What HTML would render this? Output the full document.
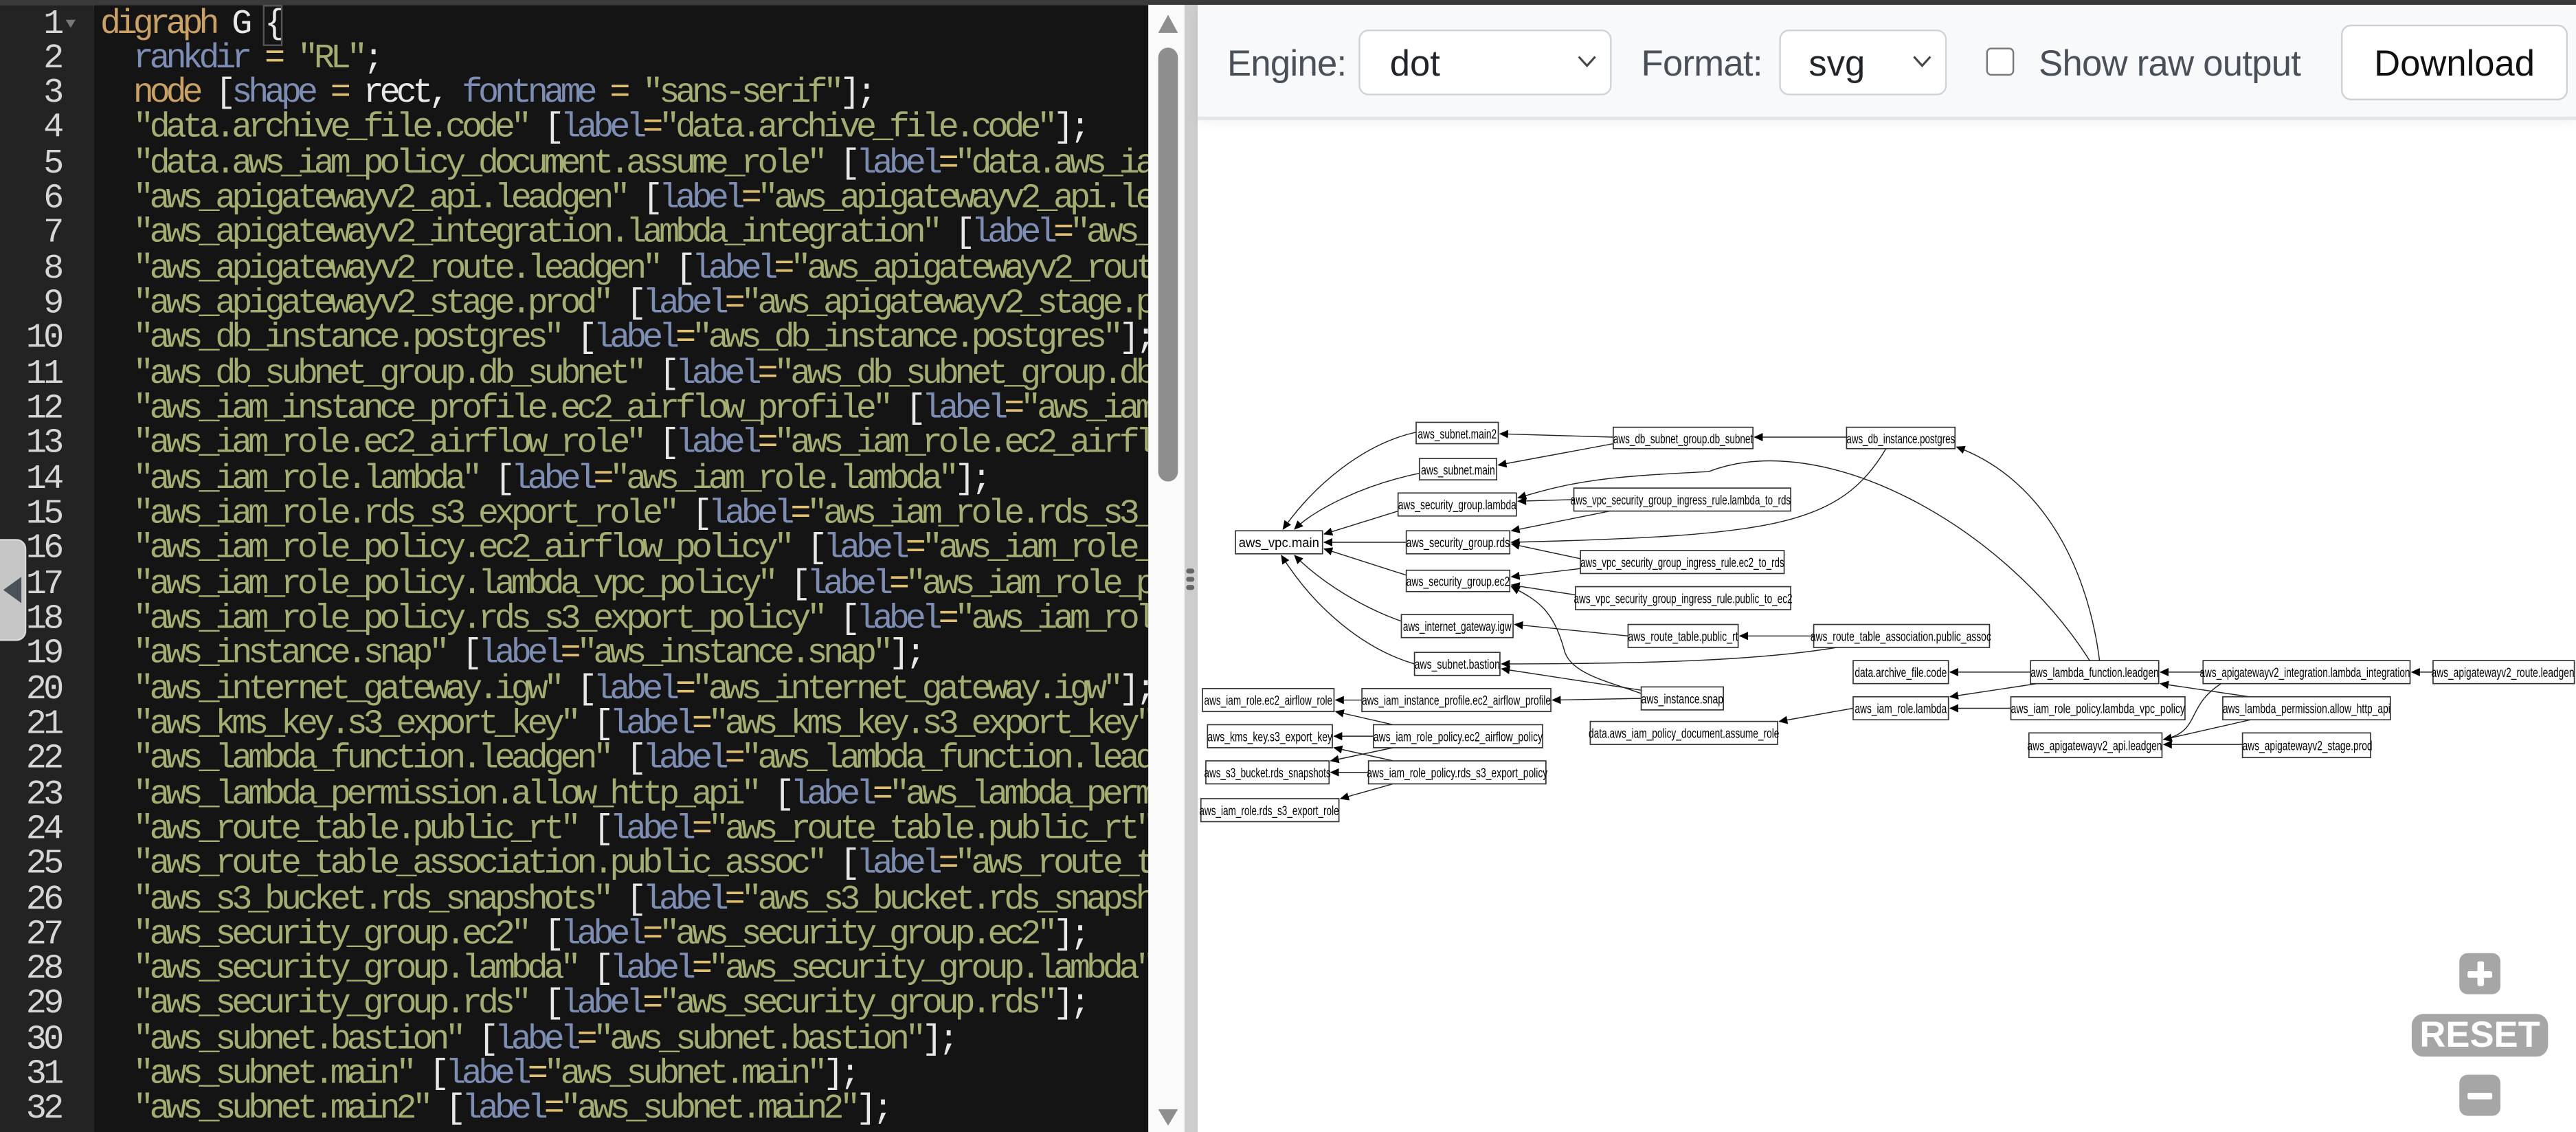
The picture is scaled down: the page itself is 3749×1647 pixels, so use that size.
<!DOCTYPE html>
<html><head><meta charset="utf-8">
<style>
html,body{margin:0;padding:0;width:3749px;height:1646px;overflow:hidden;background:#fff;}
#w{position:absolute;left:0;top:0;width:1568px;height:689px;transform:scale(2.39094);transform-origin:0 0;overflow:hidden;}
#topbar{position:absolute;left:0;top:0;width:1568px;height:3px;background:#3a3a3a;}
#gutter{position:absolute;left:0;top:4.5px;width:57px;height:686px;background:#232323;}
#gbg{position:absolute;left:0;top:3px;width:57px;height:686px;background:#232323;}
#code{position:absolute;left:57px;top:3px;width:642px;height:686px;background:#141414;overflow:hidden;}
#ci{position:absolute;left:0;top:1.5px;width:642px;height:686px;}
.ln{position:absolute;left:0;width:37px;text-align:right;color:#d6d6d6;font:21px/21.32px "Liberation Mono",monospace;letter-spacing:-2px;}
.cl{position:absolute;left:4px;white-space:pre;font:21px/21.32px "Liberation Mono",monospace;letter-spacing:-2.6px;color:#e8e8e8;}
.k{color:#c9a065}.s{color:#a3ae72}.a{color:#7e8db3}.e{color:#e0c070}
#sb{position:absolute;left:699px;top:3px;width:22px;height:686px;background:#fafafa;}
#thumb{position:absolute;left:705px;top:29px;width:12px;height:264px;background:#8e8e8e;border-radius:6px;}
#div{position:absolute;left:721px;top:3px;width:8px;height:686px;background:#cdcdcd;}
#right{position:absolute;left:729px;top:3px;width:839px;height:686px;background:#fff;}
#tb{position:absolute;left:729px;top:3px;width:839px;height:68px;background:#f8f9fa;border-bottom:2px solid #e3e5e8;box-shadow:0 2px 6px rgba(0,0,0,.05);}
.lbl{position:absolute;top:23px;font:22px "Liberation Sans",sans-serif;color:#495057;letter-spacing:-.3px}
.sel{position:absolute;top:15px;height:38px;border:1px solid #cfd4da;border-radius:6px;background:#fff;font:22px "Liberation Sans",sans-serif;color:#212529;}
#tab{position:absolute;left:-6px;top:328px;width:20px;height:60px;background:#c6c6c6;border:1px solid #d8d8d8;border-radius:6px;}
.zb{position:absolute;background:#a6a6a6;border-radius:5px;}
</style></head><body><div id="w">
<div id="topbar"></div>
<div id="gbg"></div>
<div id="gutter">
<div class="ln" style="top:0">1</div><div class="ln" style="top:21.32px">2</div><div class="ln" style="top:42.64px">3</div><div class="ln" style="top:63.96px">4</div><div class="ln" style="top:85.28px">5</div><div class="ln" style="top:106.6px">6</div><div class="ln" style="top:127.92px">7</div><div class="ln" style="top:149.24px">8</div><div class="ln" style="top:170.56px">9</div><div class="ln" style="top:191.88px">10</div><div class="ln" style="top:213.2px">11</div><div class="ln" style="top:234.52px">12</div><div class="ln" style="top:255.84px">13</div><div class="ln" style="top:277.16px">14</div><div class="ln" style="top:298.48px">15</div><div class="ln" style="top:319.8px">16</div><div class="ln" style="top:341.12px">17</div><div class="ln" style="top:362.44px">18</div><div class="ln" style="top:383.76px">19</div><div class="ln" style="top:405.08px">20</div><div class="ln" style="top:426.4px">21</div><div class="ln" style="top:447.72px">22</div><div class="ln" style="top:469.04px">23</div><div class="ln" style="top:490.36px">24</div><div class="ln" style="top:511.68px">25</div><div class="ln" style="top:533px">26</div><div class="ln" style="top:554.32px">27</div><div class="ln" style="top:575.64px">28</div><div class="ln" style="top:596.96px">29</div><div class="ln" style="top:618.28px">30</div><div class="ln" style="top:639.6px">31</div><div class="ln" style="top:660.92px">32</div>
<div style="position:absolute;left:40px;top:7px;width:0;height:0;border-left:3.5px solid transparent;border-right:3.5px solid transparent;border-top:5px solid #777"></div>
</div>
<div id="tab"><div style="position:absolute;left:7px;top:22px;width:0;height:0;border-top:8px solid transparent;border-bottom:8px solid transparent;border-right:11px solid #4b5159"></div></div>
<div id="code"><div id="ci">
<div class="cl" style="top:0"><span class="k">digraph</span> G <span style="outline:1px solid #555">{</span></div>
<div class="cl" style="top:21.32px">  <span class="a">rankdir</span> <span class="e">=</span> <span class="s">"RL"</span>;</div>
<div class="cl" style="top:42.64px">  <span class="k">node</span> [<span class="a">shape</span> <span class="e">=</span> rect, <span class="a">fontname</span> <span class="e">=</span> <span class="s">"sans-serif"</span>];</div>
<div class="cl" style="top:63.96px">  <span class="s">"data.archive_file.code"</span> [<span class="a">label</span><span class="e">=</span><span class="s">"data.archive_file.code"</span>];</div>
<div class="cl" style="top:85.28px">  <span class="s">"data.aws_iam_policy_document.assume_role"</span> [<span class="a">label</span><span class="e">=</span><span class="s">"data.aws_iam_policy_document.assume_role"</span>];</div>
<div class="cl" style="top:106.6px">  <span class="s">"aws_apigatewayv2_api.leadgen"</span> [<span class="a">label</span><span class="e">=</span><span class="s">"aws_apigatewayv2_api.leadgen"</span>];</div>
<div class="cl" style="top:127.92px">  <span class="s">"aws_apigatewayv2_integration.lambda_integration"</span> [<span class="a">label</span><span class="e">=</span><span class="s">"aws_apigatewayv2_integration.lambda_integration"</span>];</div>
<div class="cl" style="top:149.24px">  <span class="s">"aws_apigatewayv2_route.leadgen"</span> [<span class="a">label</span><span class="e">=</span><span class="s">"aws_apigatewayv2_route.leadgen"</span>];</div>
<div class="cl" style="top:170.56px">  <span class="s">"aws_apigatewayv2_stage.prod"</span> [<span class="a">label</span><span class="e">=</span><span class="s">"aws_apigatewayv2_stage.prod"</span>];</div>
<div class="cl" style="top:191.88px">  <span class="s">"aws_db_instance.postgres"</span> [<span class="a">label</span><span class="e">=</span><span class="s">"aws_db_instance.postgres"</span>];</div>
<div class="cl" style="top:213.2px">  <span class="s">"aws_db_subnet_group.db_subnet"</span> [<span class="a">label</span><span class="e">=</span><span class="s">"aws_db_subnet_group.db_subnet"</span>];</div>
<div class="cl" style="top:234.52px">  <span class="s">"aws_iam_instance_profile.ec2_airflow_profile"</span> [<span class="a">label</span><span class="e">=</span><span class="s">"aws_iam_instance_profile.ec2_airflow_profile"</span>];</div>
<div class="cl" style="top:255.84px">  <span class="s">"aws_iam_role.ec2_airflow_role"</span> [<span class="a">label</span><span class="e">=</span><span class="s">"aws_iam_role.ec2_airflow_role"</span>];</div>
<div class="cl" style="top:277.16px">  <span class="s">"aws_iam_role.lambda"</span> [<span class="a">label</span><span class="e">=</span><span class="s">"aws_iam_role.lambda"</span>];</div>
<div class="cl" style="top:298.48px">  <span class="s">"aws_iam_role.rds_s3_export_role"</span> [<span class="a">label</span><span class="e">=</span><span class="s">"aws_iam_role.rds_s3_export_role"</span>];</div>
<div class="cl" style="top:319.8px">  <span class="s">"aws_iam_role_policy.ec2_airflow_policy"</span> [<span class="a">label</span><span class="e">=</span><span class="s">"aws_iam_role_policy.ec2_airflow_policy"</span>];</div>
<div class="cl" style="top:341.12px">  <span class="s">"aws_iam_role_policy.lambda_vpc_policy"</span> [<span class="a">label</span><span class="e">=</span><span class="s">"aws_iam_role_policy.lambda_vpc_policy"</span>];</div>
<div class="cl" style="top:362.44px">  <span class="s">"aws_iam_role_policy.rds_s3_export_policy"</span> [<span class="a">label</span><span class="e">=</span><span class="s">"aws_iam_role_policy.rds_s3_export_policy"</span>];</div>
<div class="cl" style="top:383.76px">  <span class="s">"aws_instance.snap"</span> [<span class="a">label</span><span class="e">=</span><span class="s">"aws_instance.snap"</span>];</div>
<div class="cl" style="top:405.08px">  <span class="s">"aws_internet_gateway.igw"</span> [<span class="a">label</span><span class="e">=</span><span class="s">"aws_internet_gateway.igw"</span>];</div>
<div class="cl" style="top:426.4px">  <span class="s">"aws_kms_key.s3_export_key"</span> [<span class="a">label</span><span class="e">=</span><span class="s">"aws_kms_key.s3_export_key"</span>];</div>
<div class="cl" style="top:447.72px">  <span class="s">"aws_lambda_function.leadgen"</span> [<span class="a">label</span><span class="e">=</span><span class="s">"aws_lambda_function.leadgen"</span>];</div>
<div class="cl" style="top:469.04px">  <span class="s">"aws_lambda_permission.allow_http_api"</span> [<span class="a">label</span><span class="e">=</span><span class="s">"aws_lambda_permission.allow_http_api"</span>];</div>
<div class="cl" style="top:490.36px">  <span class="s">"aws_route_table.public_rt"</span> [<span class="a">label</span><span class="e">=</span><span class="s">"aws_route_table.public_rt"</span>];</div>
<div class="cl" style="top:511.68px">  <span class="s">"aws_route_table_association.public_assoc"</span> [<span class="a">label</span><span class="e">=</span><span class="s">"aws_route_table_association.public_assoc"</span>];</div>
<div class="cl" style="top:533px">  <span class="s">"aws_s3_bucket.rds_snapshots"</span> [<span class="a">label</span><span class="e">=</span><span class="s">"aws_s3_bucket.rds_snapshots"</span>];</div>
<div class="cl" style="top:554.32px">  <span class="s">"aws_security_group.ec2"</span> [<span class="a">label</span><span class="e">=</span><span class="s">"aws_security_group.ec2"</span>];</div>
<div class="cl" style="top:575.64px">  <span class="s">"aws_security_group.lambda"</span> [<span class="a">label</span><span class="e">=</span><span class="s">"aws_security_group.lambda"</span>];</div>
<div class="cl" style="top:596.96px">  <span class="s">"aws_security_group.rds"</span> [<span class="a">label</span><span class="e">=</span><span class="s">"aws_security_group.rds"</span>];</div>
<div class="cl" style="top:618.28px">  <span class="s">"aws_subnet.bastion"</span> [<span class="a">label</span><span class="e">=</span><span class="s">"aws_subnet.bastion"</span>];</div>
<div class="cl" style="top:639.6px">  <span class="s">"aws_subnet.main"</span> [<span class="a">label</span><span class="e">=</span><span class="s">"aws_subnet.main"</span>];</div>
<div class="cl" style="top:660.92px">  <span class="s">"aws_subnet.main2"</span> [<span class="a">label</span><span class="e">=</span><span class="s">"aws_subnet.main2"</span>];</div>
</div></div>
<div id="sb"></div>
<div style="position:absolute;left:705px;top:9px;width:0;height:0;border-left:6px solid transparent;border-right:6px solid transparent;border-bottom:11px solid #8e8e8e"></div>
<div id="thumb"></div>
<div style="position:absolute;left:705px;top:675px;width:0;height:0;border-left:6px solid transparent;border-right:6px solid transparent;border-top:10px solid #8e8e8e"></div>
<div id="div"><div style="position:absolute;left:1px;top:343px;width:5px;height:3px;border-radius:2px;background:#666"></div><div style="position:absolute;left:1px;top:348px;width:5px;height:3px;border-radius:2px;background:#666"></div><div style="position:absolute;left:1px;top:353px;width:5px;height:3px;border-radius:2px;background:#666"></div></div>
<div id="right"></div>
<div id="tb">
<div class="lbl" style="left:18px">Engine:</div>
<div class="sel" style="left:98px;width:152px"><span style="position:absolute;left:18px;top:7px">dot</span><svg style="position:absolute;left:132px;top:14px" width="12" height="9" viewBox="0 0 12 9"><path d="M1 1.5L6 7L11 1.5" fill="none" stroke="#444" stroke-width="1.3"/></svg></div>
<div class="lbl" style="left:270px">Format:</div>
<div class="sel" style="left:354px;width:100px"><span style="position:absolute;left:17px;top:7px">svg</span><svg style="position:absolute;left:80px;top:14px" width="12" height="9" viewBox="0 0 12 9"><path d="M1 1.5L6 7L11 1.5" fill="none" stroke="#444" stroke-width="1.3"/></svg></div>
<div style="position:absolute;left:480px;top:26px;width:15px;height:15px;border:1.5px solid #777;border-radius:3px;background:#fff"></div>
<div class="lbl" style="left:512px">Show raw output</div>
<div style="position:absolute;left:696px;top:12px;width:136px;height:44px;border:1px solid #cdd1d5;border-radius:6px;background:#fff;font:22px 'Liberation Sans',sans-serif;color:#111;text-align:center;line-height:46px">Download</div>
</div>
<svg style="position:absolute;left:0;top:0" width="1568" height="689" viewBox="0 0 1568 689">
<defs><marker id="ar" markerWidth="6" markerHeight="6" refX="5" refY="3" orient="auto" markerUnits="userSpaceOnUse"><path d="M0 0.5L5.5 3L0 5.5z" fill="#000"/></marker></defs>
<g fill="none" stroke="#222" stroke-width="0.6" marker-end="url(#ar)">
<path d="M982 266L913 264"/>
<path d="M982 270L912 283"/>
<path d="M1124 266L1068 266"/>
<path d="M1148 273C1120 320 1080 326 920 330"/>
<path d="M1272 402C1220 320 1110 260 1040 287C980 290 960 292 924 303"/>
<path d="M1278 402C1270 340 1240 290 1191 272"/>
<path d="M958 304L924 305"/>
<path d="M980 311L920 323"/>
<path d="M962 340L920 331"/>
<path d="M962 346L920 351"/>
<path d="M959 362L920 356"/>
<path d="M999 422C980 415 955 410 952 395C945 370 935 365 920 357"/>
<path d="M999 420L914 407"/>
<path d="M999 425L945 426"/>
<path d="M991 387L922 380"/>
<path d="M1104 387L1059 387"/>
<path d="M1118 394C1070 402 1000 404 914 404"/>
<path d="M851 311L806 325"/>
<path d="M856 330L806 330"/>
<path d="M856 350L806 334"/>
<path d="M862 263C830 270 800 295 781 322"/>
<path d="M864 288C830 295 800 310 788 322"/>
<path d="M853 378C830 370 805 355 788 338"/>
<path d="M861 404C830 395 800 370 780 338"/>
<path d="M829 426L813 426"/>
<path d="M848 441L813 433"/>
<path d="M836 448L812 448"/>
<path d="M848 455L810 463"/>
<path d="M848 463L812 455"/>
<path d="M833 470L810 470"/>
<path d="M848 477L816 486"/>
<path d="M1236 409L1187 409"/>
<path d="M1240 416L1187 424"/>
<path d="M1128 431L1083 439"/>
<path d="M1224 431L1187 431"/>
<path d="M1341 409L1315 409"/>
<path d="M1352 416C1330 430 1340 445 1317 450"/>
<path d="M1481 409L1468 409"/>
<path d="M1369 424L1315 416"/>
<path d="M1370 438L1317 450"/>
<path d="M1365 453L1317 453"/>
</g>
<g fill="#fff" stroke="#333" stroke-width="0.7">
<rect x="862" y="257" width="50" height="13"/><rect x="864" y="279" width="47" height="13"/><rect x="982" y="260" width="85" height="13"/><rect x="1124" y="260" width="66" height="13"/><rect x="851" y="300" width="72" height="14"/><rect x="958" y="297" width="132" height="14"/><rect x="752" y="323" width="53" height="14"/><rect x="856" y="323" width="63" height="14"/><rect x="962" y="335" width="124" height="14"/><rect x="856" y="347" width="63" height="13"/><rect x="959" y="357" width="131" height="14"/><rect x="853" y="374" width="68" height="14"/><rect x="991" y="380" width="67" height="14"/><rect x="1104" y="380" width="107" height="14"/><rect x="861" y="397" width="52" height="14"/><rect x="1128" y="402" width="58" height="14"/><rect x="1236" y="402" width="78" height="14"/><rect x="1341" y="402" width="126" height="14"/><rect x="1481" y="402" width="86" height="14"/><rect x="732" y="419" width="80" height="14"/><rect x="829" y="419" width="115" height="14"/><rect x="999" y="418" width="50" height="14"/><rect x="1128" y="424" width="58" height="14"/><rect x="1224" y="424" width="106" height="14"/><rect x="1353" y="424" width="102" height="14"/><rect x="735" y="441" width="76" height="14"/><rect x="836" y="441" width="103" height="14"/><rect x="968" y="439" width="114" height="14"/><rect x="1235" y="446" width="81" height="15"/><rect x="1365" y="446" width="78" height="15"/><rect x="734" y="463" width="75" height="14"/><rect x="833" y="463" width="108" height="14"/><rect x="731" y="486" width="84" height="14"/>
</g>
<g font-family="Liberation Sans,sans-serif" font-size="8" fill="#000">
<text x="863" y="266.8" textLength="48" lengthAdjust="spacingAndGlyphs">aws_subnet.main2</text>
<text x="865" y="288.8" textLength="45" lengthAdjust="spacingAndGlyphs">aws_subnet.main</text>
<text x="982" y="269.8" textLength="85" lengthAdjust="spacingAndGlyphs">aws_db_subnet_group.db_subnet</text>
<text x="1124" y="269.8" textLength="66" lengthAdjust="spacingAndGlyphs">aws_db_instance.postgres</text>
<text x="851" y="310" textLength="72" lengthAdjust="spacingAndGlyphs">aws_security_group.lambda</text>
<text x="956" y="307" textLength="134" lengthAdjust="spacingAndGlyphs">aws_vpc_security_group_ingress_rule.lambda_to_rds</text>
<text x="754" y="333" textLength="49" lengthAdjust="spacingAndGlyphs">aws_vpc.main</text>
<text x="856" y="333" textLength="63" lengthAdjust="spacingAndGlyphs">aws_security_group.rds</text>
<text x="962" y="345" textLength="124" lengthAdjust="spacingAndGlyphs">aws_vpc_security_group_ingress_rule.ec2_to_rds</text>
<text x="856" y="356.5" textLength="63" lengthAdjust="spacingAndGlyphs">aws_security_group.ec2</text>
<text x="958" y="367" textLength="133" lengthAdjust="spacingAndGlyphs">aws_vpc_security_group_ingress_rule.public_to_ec2</text>
<text x="854" y="384" textLength="66" lengthAdjust="spacingAndGlyphs">aws_internet_gateway.igw</text>
<text x="991" y="390" textLength="67" lengthAdjust="spacingAndGlyphs">aws_route_table.public_rt</text>
<text x="1102" y="390" textLength="110" lengthAdjust="spacingAndGlyphs">aws_route_table_association.public_assoc</text>
<text x="861" y="407" textLength="52" lengthAdjust="spacingAndGlyphs">aws_subnet.bastion</text>
<text x="1129" y="412" textLength="56" lengthAdjust="spacingAndGlyphs">data.archive_file.code</text>
<text x="1236" y="412" textLength="78" lengthAdjust="spacingAndGlyphs">aws_lambda_function.leadgen</text>
<text x="1339" y="412" textLength="128" lengthAdjust="spacingAndGlyphs">aws_apigatewayv2_integration.lambda_integration</text>
<text x="1480" y="412" textLength="87" lengthAdjust="spacingAndGlyphs">aws_apigatewayv2_route.leadgen</text>
<text x="733" y="429" textLength="78" lengthAdjust="spacingAndGlyphs">aws_iam_role.ec2_airflow_role</text>
<text x="829" y="429" textLength="115" lengthAdjust="spacingAndGlyphs">aws_iam_instance_profile.ec2_airflow_profile</text>
<text x="999" y="428" textLength="50" lengthAdjust="spacingAndGlyphs">aws_instance.snap</text>
<text x="1129" y="434" textLength="56" lengthAdjust="spacingAndGlyphs">aws_iam_role.lambda</text>
<text x="1224" y="434" textLength="106" lengthAdjust="spacingAndGlyphs">aws_iam_role_policy.lambda_vpc_policy</text>
<text x="1353" y="434" textLength="102" lengthAdjust="spacingAndGlyphs">aws_lambda_permission.allow_http_api</text>
<text x="735" y="451" textLength="76" lengthAdjust="spacingAndGlyphs">aws_kms_key.s3_export_key</text>
<text x="836" y="451" textLength="103" lengthAdjust="spacingAndGlyphs">aws_iam_role_policy.ec2_airflow_policy</text>
<text x="967" y="449" textLength="116" lengthAdjust="spacingAndGlyphs">data.aws_iam_policy_document.assume_role</text>
<text x="1234" y="456.5" textLength="82" lengthAdjust="spacingAndGlyphs">aws_apigatewayv2_api.leadgen</text>
<text x="1365" y="456.5" textLength="79" lengthAdjust="spacingAndGlyphs">aws_apigatewayv2_stage.prod</text>
<text x="733" y="473" textLength="77" lengthAdjust="spacingAndGlyphs">aws_s3_bucket.rds_snapshots</text>
<text x="832" y="473" textLength="110" lengthAdjust="spacingAndGlyphs">aws_iam_role_policy.rds_s3_export_policy</text>
<text x="730" y="496" textLength="85" lengthAdjust="spacingAndGlyphs">aws_iam_role.rds_s3_export_role</text>
</g>
</svg>
<div class="zb" style="left:1497px;top:580px;width:25px;height:25px"><div style="position:absolute;left:5px;top:10.5px;width:15px;height:4px;background:#fff;border-radius:1px"></div><div style="position:absolute;left:10.5px;top:5px;width:4px;height:15px;background:#fff;border-radius:1px"></div></div>
<div class="zb" style="left:1468px;top:617px;width:83px;height:26px;border-radius:7px;color:#fff;font:bold 22px/26px 'Liberation Sans',sans-serif;text-align:center">RESET</div>
<div class="zb" style="left:1497px;top:654px;width:25px;height:25px"><div style="position:absolute;left:5px;top:10.5px;width:15px;height:4px;background:#fff;border-radius:1px"></div></div>
</div></body></html>
